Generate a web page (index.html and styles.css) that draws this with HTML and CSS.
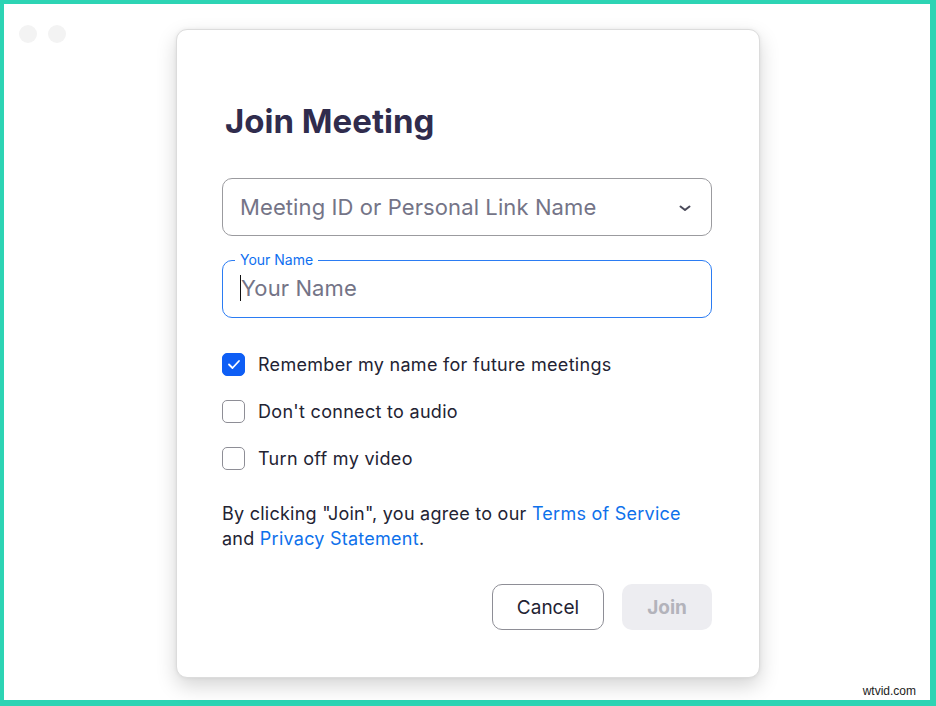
FILE: index.html
```html
<!DOCTYPE html>
<html lang="en">
<head>
  <title>Join Meeting</title>
  <meta charset="utf-8">
  <meta name="viewport" content="width=device-width, initial-scale=1">
  <link rel="stylesheet" href="styles.css">
</head>
<body>
  <div class="frame">
    <div class="window">
      <div class="lights"><span></span><span></span></div>

      <form class="dialog">
        <h1 class="dialog-title">Join Meeting</h1>

        <label class="select-field">
          <input type="text" name="meeting" placeholder="Meeting ID or Personal Link Name">
          <svg class="chevron" width="12" height="7" viewBox="0 0 12 7">
            <path d="M1.5 1.5 L6 5 L10.5 1.5" fill="none" stroke="#4a4a5a" stroke-width="2" stroke-linecap="round" stroke-linejoin="round"/>
          </svg>
        </label>

        <fieldset class="name-field">
          <legend>Your Name</legend>
          <span class="caret"></span>
          <input type="text" name="name" placeholder="Your Name">
        </fieldset>

        <div class="options">
          <label class="option">
            <span class="box checked">
              <svg width="14" height="11" viewBox="0 0 14 11">
                <path d="M2 5.5 L5.5 9 L12 2" fill="none" stroke="#ffffff" stroke-width="1.8" stroke-linecap="round" stroke-linejoin="round"/>
              </svg>
            </span>
            Remember my name for future meetings
          </label>
          <label class="option">
            <span class="box"></span>
            Don't connect to audio
          </label>
          <label class="option">
            <span class="box"></span>
            Turn off my video
          </label>
        </div>

        <p class="terms">
          By clicking "Join", you agree to our <a href="#">Terms of Service</a><br>
          and <a href="#">Privacy Statement</a>.
        </p>

        <div class="toolbar">
          <button type="button" class="btn-cancel">Cancel</button>
          <button type="submit" class="btn-join" disabled>Join</button>
        </div>
      </form>

      <span class="watermark">wtvid.com</span>
    </div>
  </div>
</body>
</html>
```

FILE: styles.css
```css
body {
  margin: 0;
  font-family: "Inter", "Liberation Sans", sans-serif;
  color: #232333;
}

.frame {
  box-sizing: border-box;
  height: 706px;
  border-style: solid;
  border-color: #2dd4b4;
  border-width: 4px 6px 6px 4px;
}

.window {
  position: relative;
  height: 100%;
  background-color: #ffffff;
  padding: 25px 0 0 2px;
  box-sizing: border-box;
}

.lights {
  position: absolute;
  top: 21px;
  left: 15px;
  display: flex;
  gap: 11px;
}

.lights span {
  width: 18px;
  height: 18px;
  border-radius: 50%;
  background-color: #f3f3f3;
}

.dialog {
  box-sizing: border-box;
  width: 584px;
  height: 649px;
  margin: 0 auto;
  padding: 71px 47px 0 45px;
  background-color: #ffffff;
  border: 1px solid #dcdcdc;
  border-radius: 11px;
  box-shadow: 0 8px 20px rgba(0, 0, 0, 0.17), 0 0 4px rgba(0, 0, 0, 0.06);
}

.dialog-title {
  margin: 0 0 37px 3px;
  font-size: 33px;
  line-height: 40px;
  font-weight: 700;
  color: #302c4d;
  letter-spacing: 0;
}

input {
  border: 0;
  outline: none;
  padding: 0;
  font-family: inherit;
  font-size: 22px;
  letter-spacing: 0.1px;
  color: #232333;
  background: transparent;
  flex: 1;
}

input::placeholder {
  color: #747487;
}

.select-field {
  box-sizing: border-box;
  display: flex;
  align-items: center;
  height: 58px;
  padding: 0 20px 0 17px;
  border: 1px solid #9b9b9f;
  border-radius: 10px;
}

.chevron {
  margin-top: 2px;
}

.name-field {
  box-sizing: border-box;
  display: flex;
  align-items: center;
  height: 66px;
  margin: 16px 0 0;
  padding: 0 16px 10px 17px;
  border: 1.5px solid #2b7cf3;
  border-radius: 10px;
  min-width: 0;
}

.name-field legend {
  margin-left: -5px;
  padding: 0 5px;
  font-size: 14px;
  line-height: 16px;
  color: #0e6ff0;
}

.caret {
  width: 1px;
  height: 26px;
  background-color: #111111;
}

.options {
  display: flex;
  flex-direction: column;
  gap: 23px;
  margin-top: 34px;
}

.option {
  display: flex;
  align-items: center;
  gap: 13px;
  height: 24px;
  font-size: 18px;
  letter-spacing: 0.3px;
}

.box {
  box-sizing: border-box;
  display: flex;
  align-items: center;
  justify-content: center;
  width: 23px;
  height: 23px;
  border: 1.5px solid #8e8e96;
  border-radius: 5px;
}

.box.checked {
  background-color: #0e5ef5;
  border-color: #0e5ef5;
}

.terms {
  margin: 31px 0 0;
  font-size: 18px;
  line-height: 25px;
  letter-spacing: 0.25px;
}

.terms a {
  color: #0e71eb;
  text-decoration: none;
}

.toolbar {
  display: flex;
  justify-content: flex-end;
  gap: 18px;
  margin-top: 33px;
}

.toolbar button {
  height: 46px;
  border-radius: 10px;
  font-family: inherit;
  font-size: 19px;
}

.btn-cancel {
  width: 112px;
  background-color: #ffffff;
  border: 1px solid #8e8e96;
  color: #232333;
}

.btn-join {
  width: 90px;
  background-color: #ededf1;
  border: 0;
  color: #b3b3bb;
  font-weight: 700;
}

.watermark {
  position: absolute;
  right: 14px;
  bottom: 2px;
  font-size: 12px;
  color: #222222;
  font-family: "Liberation Sans", sans-serif;
}
```
